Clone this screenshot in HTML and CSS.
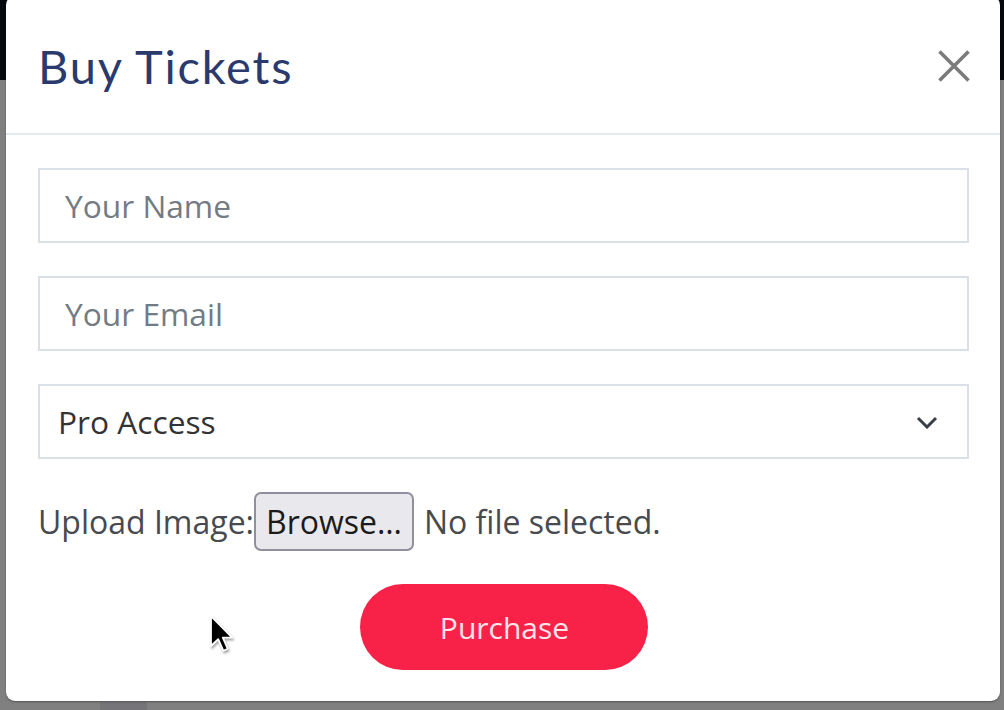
FILE: index.html
```html
<!DOCTYPE html>
<html lang="en">
<head>
<meta charset="utf-8">
<title>Buy Tickets</title>
<link rel="stylesheet" href="styles.css">
</head>
<body>
<div class="modal">
  <div class="modal-header">
    <h5 class="modal-title">Buy Tickets</h5>
    <button class="close" type="button" aria-label="Close">
      <svg viewBox="0 0 32 32" width="32" height="32"><path d="M1.5 1.5 L30.5 30.5 M30.5 1.5 L1.5 30.5" stroke="#7b7b7b" stroke-width="3.6" fill="none" stroke-linecap="butt"/></svg>
    </button>
  </div>
  <form class="modal-body">
    <div class="field"><span class="placeholder">Your Name</span></div>
    <div class="field"><span class="placeholder">Your Email</span></div>
    <div class="field select">
      <span class="value">Pro Access</span>
      <svg class="chevron" viewBox="0 0 22 13" width="22" height="13"><path d="M2 2 L11 11 L20 2" stroke="#3a3f45" stroke-width="3" fill="none"/></svg>
    </div>
    <div class="upload">
      <span class="upload-label">Upload Image:</span>
      <span class="browse">Browse…</span>
      <span class="nofile">No file selected.</span>
    </div>
    <div class="actions">
      <button class="purchase" type="button">Purchase</button>
    </div>
  </form>
</div>
<svg class="cursor" viewBox="0 0 13 20" width="26" height="40"><path d="M1 1 L1 16 L4.6 12.6 L7.2 18.4 L9.4 17.4 L6.9 11.8 L11.6 11.8 Z" fill="#000" stroke="#fff" stroke-width="0.9" stroke-linejoin="round"/></svg>
</body>
</html>
```
FILE: styles.css
```css
html, body {
  margin: 0;
  padding: 0;
  width: 1004px;
  height: 710px;
  overflow: hidden;
}
body {
  position: relative;
  background:
    linear-gradient(#747479, #747479) 100px 702px / 47px 8px no-repeat,
    linear-gradient(to bottom, #05080f 0, #05080f 80px, #808080 80px);
  font-family: "Open Sans", "Noto Sans", sans-serif;
}
.modal {
  box-sizing: border-box;
  margin: -4px 0 0 6px;
  width: 994px;
  height: 705px;
  background: #fff;
  border-radius: 9px;
  box-shadow: 0 1px 2px rgba(0,0,0,0.35);
  display: flex;
  flex-direction: column;
}
.modal-header {
  box-sizing: border-box;
  height: 139px;
  padding: 4px 30px 0 32px;
  border-bottom: 2px solid #e6e9ee;
  display: flex;
  align-items: center;
  justify-content: space-between;
}
.modal-title {
  margin: 0;
  font-family: "Lato", sans-serif;
  font-weight: 400;
  font-size: 47px;
  letter-spacing: 1.8px;
  color: #2a3a6c;
  line-height: 1;
}
.close {
  background: none;
  border: 0;
  padding: 0;
  display: flex;
  margin-top: -1px;
}
.modal-body {
  margin: 0;
  padding: 33px 31px 30px 32px;
  display: flex;
  flex-direction: column;
  gap: 33px;
}
.field {
  box-sizing: border-box;
  height: 75px;
  border: 2px solid #dbe0e6;
  display: flex;
  align-items: center;
  padding: 0 24px 0 25px;
  font-size: 31.7px;
}
.placeholder {
  color: #737b83;
}
.select {
  padding-left: 18px;
  justify-content: space-between;
  padding-right: 29px;
}
.value {
  color: #333;
}
.chevron {
  margin-top: 2px;
}
.upload {
  display: flex;
  align-items: center;
  height: 59px;
  font-size: 32px;
  color: #474b50;
}
.browse {
  box-sizing: border-box;
  height: 59px;
  margin-left: 0;
  padding: 0 10px;
  display: flex;
  align-items: center;
  background: #e9e9ed;
  border: 2px solid #8f8f9d;
  border-radius: 7px;
  color: #1b1b1b;
}
.nofile {
  margin-left: 10px;
}
.actions {
  display: flex;
  justify-content: center;
}
.purchase {
  width: 288px;
  height: 86px;
  border: 0;
  border-radius: 43px;
  background: #f82249;
  color: #ffe4ea;
  font-family: "Open Sans", "Noto Sans", sans-serif;
  font-size: 30px;
  padding: 0 0 0 2px;
}
.cursor {
  position: absolute;
  left: 209px;
  top: 614px;
  filter: drop-shadow(1px 2px 1px rgba(0,0,0,0.35));
}
```
